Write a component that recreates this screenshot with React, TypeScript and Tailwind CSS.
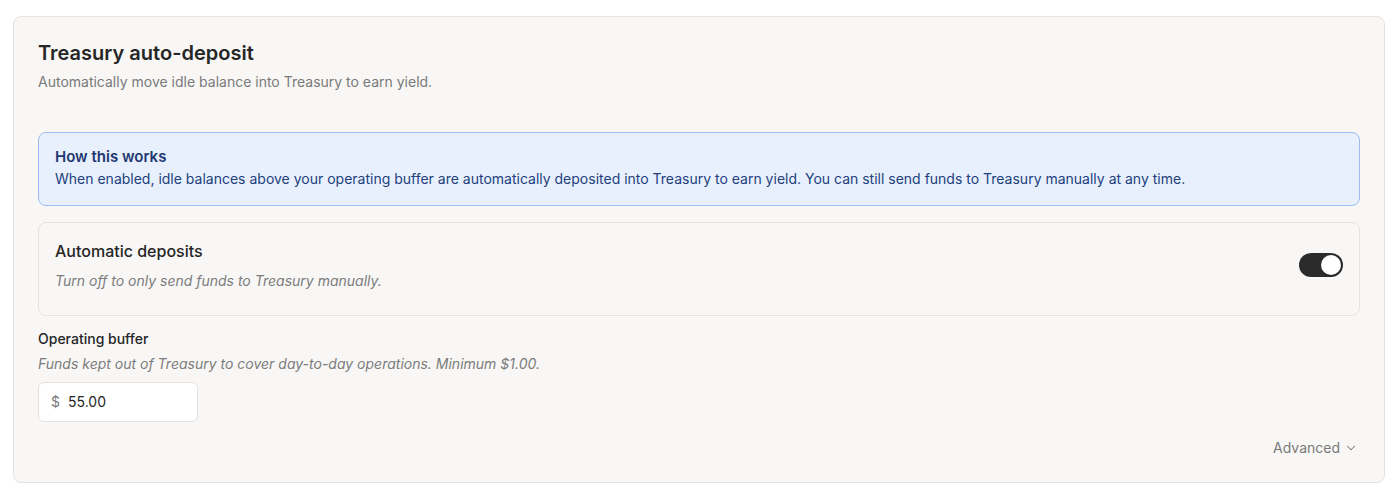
import React, { useState } from "react"
import { ChevronDown } from "lucide-react"

const font = { fontFamily: "Inter, 'Noto Sans', sans-serif" }

function Toggle({ on, onChange }: { on: boolean; onChange: () => void }) {
  return (
    <button
      type="button"
      onClick={onChange}
      className={
        "relative h-6 w-11 shrink-0 rounded-full transition-colors " +
        (on ? "bg-[#2b2b2b]" : "bg-[#d4d4d4]")
      }
    >
      <span
        className={
          "absolute top-[2px] h-5 w-5 rounded-full bg-white shadow transition-all " +
          (on ? "left-[22px]" : "left-[2px]")
        }
      />
    </button>
  )
}

export default function App() {
  const [enabled, setEnabled] = useState(true)
  const [buffer, setBuffer] = useState("55.00")

  return (
    <div className="min-h-screen bg-white pl-[13px] pr-[12px] pt-4" style={font}>
      <div className="rounded-lg border border-[#e4e3e0] bg-[#f8f7f5] px-6 pt-[22px] pb-6">
        <h2 className="text-xl leading-7 font-semibold text-[#262626]">Treasury auto-deposit</h2>
        <p className="mt-[5px] text-sm text-[#7a7a7a]">Automatically move idle balance into Treasury to earn yield.</p>

        <div className="mt-10 rounded-lg border border-[#9dbdf0] bg-[#e8f0fd] px-4 pt-[14px] pb-4">
          <div className="text-[15px] leading-5 font-semibold text-[#1d3770]">How this works</div>
          <p className="mt-[2px] text-sm text-[#233f7c]">
            When enabled, idle balances above your operating buffer are automatically deposited into Treasury to earn
            yield. You can still send funds to Treasury manually at any time.
          </p>
        </div>

        <div className="mt-4 flex items-center justify-between rounded-lg border border-[#e4e3e0] bg-[#f8f7f6] px-4 pt-4 pb-6">
          <div>
            <div className="text-base font-medium text-[#262626]">Automatic deposits</div>
            <p className="mt-2 text-sm italic text-[#7c7c7c]">Turn off to only send funds to Treasury manually.</p>
          </div>
          <Toggle on={enabled} onChange={() => setEnabled(!enabled)} />
        </div>

        <div className="mt-[13px]">
          <label className="block text-sm font-medium text-[#262626]">Operating buffer</label>
          <p className="mt-[5px] text-sm italic text-[#7c7c7c]">
            Funds kept out of Treasury to cover day-to-day operations. Minimum $1.00.
          </p>
          <div className="mt-2 flex h-10 w-40 items-center rounded-md border border-[#e4e3e0] bg-white px-3">
            <span className="text-sm text-[#7a7a7a]">$</span>
            <input
              value={buffer}
              onChange={(e) => setBuffer(e.target.value)}
              className="ml-2 w-full bg-transparent text-sm text-[#262626] outline-none"
            />
          </div>
        </div>

        <div className="mt-4 flex justify-end">
          <button type="button" className="flex items-center gap-1 pr-[2px] text-sm text-[#7a7a7a]">
            Advanced
            <ChevronDown size={14} strokeWidth={1.75} />
          </button>
        </div>
      </div>
    </div>
  )
}
